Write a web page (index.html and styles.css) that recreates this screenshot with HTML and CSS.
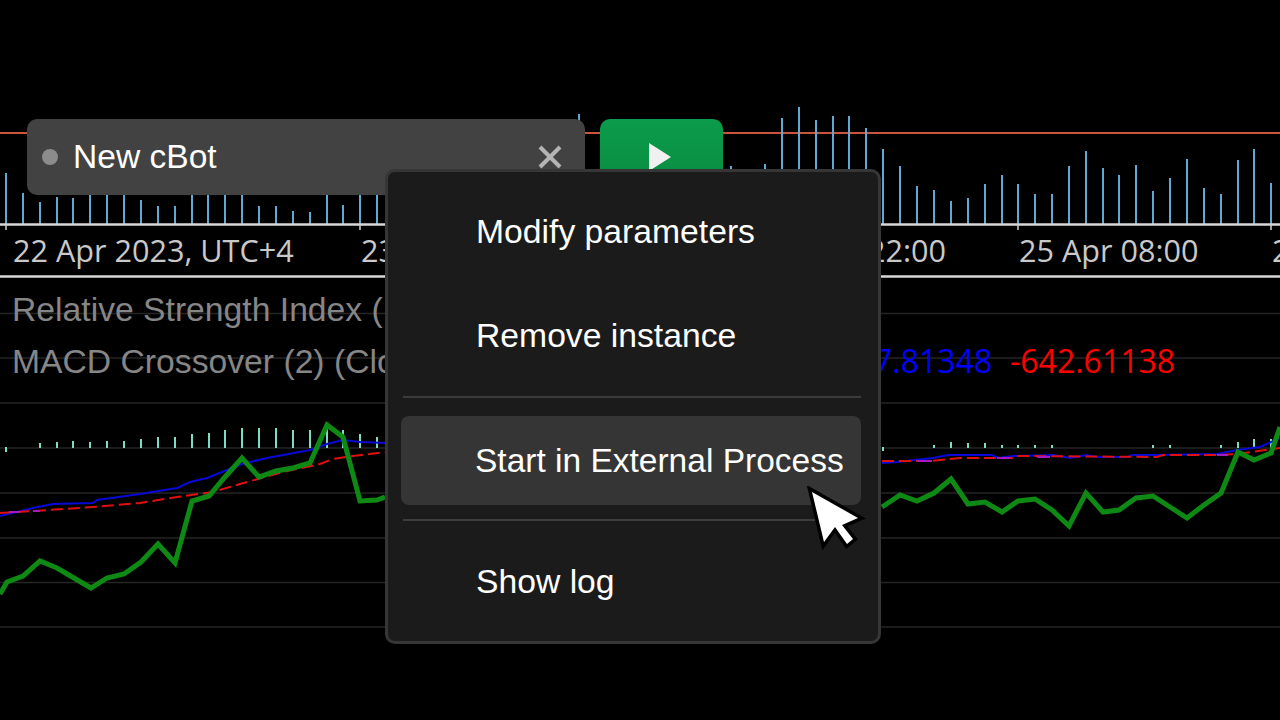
FILE: index.html
```html
<!DOCTYPE html>
<html lang="en">
<head>
    <meta charset="UTF-8">
    <title>New cBot</title>
    <link rel="stylesheet" href="styles.css">
</head>
<body>
    <div class="stage">
        <!-- Chart background -->
        <svg class="chart" width="1280" height="720" viewBox="0 0 1280 720">
            <path class="grid" d="M0 313.5H1280M0 358H1280M0 403H1280M0 448H1280M0 493H1280M0 538H1280M0 582.5H1280M0 627H1280"/>
            <path class="stop-line" d="M0 133H1280"/>
            <path class="volume" d="M6 224V173M23 224V193M40 224V202M57 224V197M73 224V198M90 224V195M107 224V195M124 224V195M141 224V200M158 224V206M175 224V206M192 224V195M208 224V195M225 224V195M242 224V195M259 224V206M276 224V206M293 224V211M310 224V212M327 224V195M343 224V205M360 224V195M377 224V195M579 130V114M731 180V166M765 180V164M782 180V118M799 180V107M816 180V120M833 180V116M849 180V116M866 180V128M883 224V149M900 224V166M917 224V186M934 224V190M951 224V201M968 224V198M985 224V184M1002 224V175M1018 224V184M1035 224V194M1052 224V194M1069 224V166M1086 224V151M1103 224V168M1119 224V175M1136 224V165M1153 224V191M1170 224V178M1187 224V159M1204 224V188M1221 224V194M1238 224V160M1254 224V149M1271 224V183"/>
            <path class="axis" d="M0 224.5H1280M0 276.5H1280"/>
            <path class="axis-tick" d="M6 224V230M360 224V230M1018 224V230M1271 224V230"/>

            <text class="axis-label" x="13" y="262">22 Apr 2023, UTC+4</text>
            <text class="axis-label" x="361" y="262">23</text>
            <text class="axis-label" x="868" y="262">22:00</text>
            <text class="axis-label" x="1019" y="262">25 Apr 08:00</text>
            <text class="axis-label" x="1272" y="262">2</text>

            <text class="legend" x="12" y="321">Relative Strength Index (</text>
            <text class="legend" x="12" y="373">MACD Crossover (2) (Close</text>
            <text class="legend-blue" x="874" y="373">7.81348</text>
            <text class="legend-red" x="1010" y="373">-642.61138</text>

            <path class="histogram" d="M6 447V452M40 448V443M57 448V442M73 448V441M90 448V442M107 448V441M124 448V441M141 448V439M158 448V437M175 448V437M192 448V434M209 448V433M225 448V430M242 448V428M259 448V428M276 448V428M293 448V430M310 448V430M327 448V428M343 448V430M360 448V434M377 448V437M883 447V451M934 448V445M951 448V442M968 448V443M985 448V443M1002 448V445M1018 448V445M1035 448V445M1052 448V445M1153 448V445M1170 448V445M1221 448V445M1238 448V442M1254 448V439M1271 448V439"/>

            <polyline class="macd" points="0,516 33,508 53,504 93,503 97,500 140,494 177,488 190,482 207,478 242,464 267,458 310,450 327,444 343,440 360,442 385,443"/>
            <polyline class="macd" points="882,463 897,462 933,458 948,455 992,455 998,458 1013,456 1053,455 1070,458 1087,455 1097,457 1128,457 1132,455 1160,455 1217,454 1237,450 1260,447 1280,438"/>
            <polyline class="signal" points="0,513 33,511 93,507 140,503 177,497 213,492 240,484 283,472 320,464 333,459 353,456 385,452"/>
            <polyline class="signal" points="882,461 930,461 950,459 960,458 1013,458 1017,456 1157,457 1163,455 1217,455 1237,454 1280,448"/>
            <path class="signal-mix" d="M9 512H20M33 511H40M918 461H932M997 458H1010M1037 457H1050M1217 455H1228"/>

            <polyline class="rsi" points="0,594 7,582 23,576 40,561 57,568 91,588 107,578 124,574 141,562 158,544 175,563 192,501 209,496 225,477 242,458 259,477 276,471 293,468 310,463 327,425 343,437 360,501 377,500 385,497"/>
            <polyline class="rsi" points="882,507 900,495 917,501 934,493 951,479 968,504 985,502 1002,512 1018,501 1035,499 1052,510 1069,526 1086,493 1103,512 1119,510 1136,498 1153,496 1170,507 1187,518 1204,505 1221,493 1238,452 1254,460 1271,453 1280,427"/>
        </svg>

        <!-- Instance bar -->
        <div class="instance">
            <span class="instance-dot"></span>
            <span class="instance-name">New cBot</span>
            <svg class="instance-close" width="26" height="26" viewBox="0 0 26 26">
                <path d="M3 3L23 23M23 3L3 23"/>
            </svg>
        </div>
        <div class="play-btn">
            <svg width="22" height="28" viewBox="0 0 22 28">
                <path d="M0 0L22 14L0 28Z"/>
            </svg>
        </div>

        <!-- Context menu -->
        <div class="menu">
            <div class="menu-item">Modify parameters</div>
            <div class="menu-item">Remove instance</div>
            <div class="menu-sep"></div>
            <div class="menu-item hover">Start in External Process</div>
            <div class="menu-sep lower"></div>
            <div class="menu-item last">Show log</div>
        </div>

        <svg class="cursor" width="64" height="72" viewBox="0 0 64 72">
            <path d="M6 6L52 32L36 39L47 53L41 58L29 41L18 56Z"/>
        </svg>
    </div>
</body>
</html>
```

FILE: styles.css
```css
body {
    margin: 0;
    background-color: #000;
    overflow: hidden;
}
.stage {
    position: relative;
    width: 1280px;
    height: 720px;
    overflow: hidden;
    font-family: "Liberation Sans", Arial, sans-serif;
}
.chart {
    display: block;
}
.chart path,
.chart polyline {
    fill: none;
}
.grid {
    stroke: #252525;
    stroke-width: 1.5;
}
.stop-line {
    stroke: #c9553b;
    stroke-width: 2;
}
.volume {
    stroke: #5fa9d2;
    stroke-width: 2;
}
.axis {
    stroke: #d8d8d8;
    stroke-width: 2.5;
}
.axis-tick {
    stroke: #d2d2d2;
    stroke-width: 1.5;
}
.axis-label {
    font-family: "Open Sans", sans-serif;
    font-size: 30.6px;
    fill: #c9c9c9;
}
.legend {
    font-size: 33.7px;
    fill: #868686;
}
.legend-blue,
.legend-red {
    font-family: "Open Sans", sans-serif;
    font-size: 32px;
}
.legend-blue {
    fill: #0000ff;
}
.legend-red {
    fill: #ff0000;
}
.histogram {
    stroke: #7edcc4;
    stroke-width: 2;
}
.macd {
    stroke: #0808d8;
    stroke-width: 2;
}
.signal {
    stroke: #e01010;
    stroke-width: 2;
    stroke-dasharray: 12 5;
}
.signal-mix {
    stroke: #a818c0;
    stroke-width: 2;
}
.rsi {
    stroke: #0e8a14;
    stroke-width: 5;
}

.instance {
    position: absolute;
    left: 27px;
    top: 119px;
    width: 558px;
    height: 76px;
    box-sizing: border-box;
    padding: 0 22px 0 15px;
    display: flex;
    align-items: center;
    background-color: #424242;
    border-radius: 10px;
}
.instance-dot {
    width: 16px;
    height: 16px;
    border-radius: 50%;
    background-color: #8c8c8c;
    margin-right: 15px;
}
.instance-name {
    flex: 1;
    font-size: 33.6px;
    color: #fff;
}
.instance-close path {
    fill: none;
    stroke: #b4b4b4;
    stroke-width: 4;
}
.play-btn {
    position: absolute;
    left: 600px;
    top: 119px;
    width: 123px;
    height: 76px;
    padding-right: 4px;
    box-sizing: border-box;
    display: flex;
    align-items: center;
    justify-content: center;
    background: linear-gradient(#0b9c4b, #0a8a40);
    border-radius: 10px;
}
.play-btn path {
    fill: #f0f0f0;
}

.menu {
    position: absolute;
    left: 385px;
    top: 169px;
    width: 496px;
    height: 475px;
    box-sizing: border-box;
    padding: 7px 17px 0 13px;
    background-color: #1b1b1b;
    border: 3px solid #363636;
    border-radius: 10px;
}
.menu-item {
    height: 104px;
    padding-left: 75px;
    display: flex;
    align-items: center;
    font-size: 33.7px;
    color: #fff;
}
.menu-item.hover {
    height: 89px;
    margin-top: 18px;
    padding-left: 74px;
    font-size: 33.5px;
    background-color: #353535;
    border-radius: 8px;
}
.menu-item.last {
    height: 90px;
    margin-top: 15px;
}
.menu-sep {
    height: 2px;
    margin: 9px 0 0 2px;
    background-color: #3c3c3c;
}
.menu-sep.lower {
    margin-top: 14px;
}
.cursor {
    position: absolute;
    left: 806px;
    top: 486px;
}
.cursor path {
    fill: #fff;
    stroke: #000;
    stroke-width: 7;
    paint-order: stroke;
}
```
